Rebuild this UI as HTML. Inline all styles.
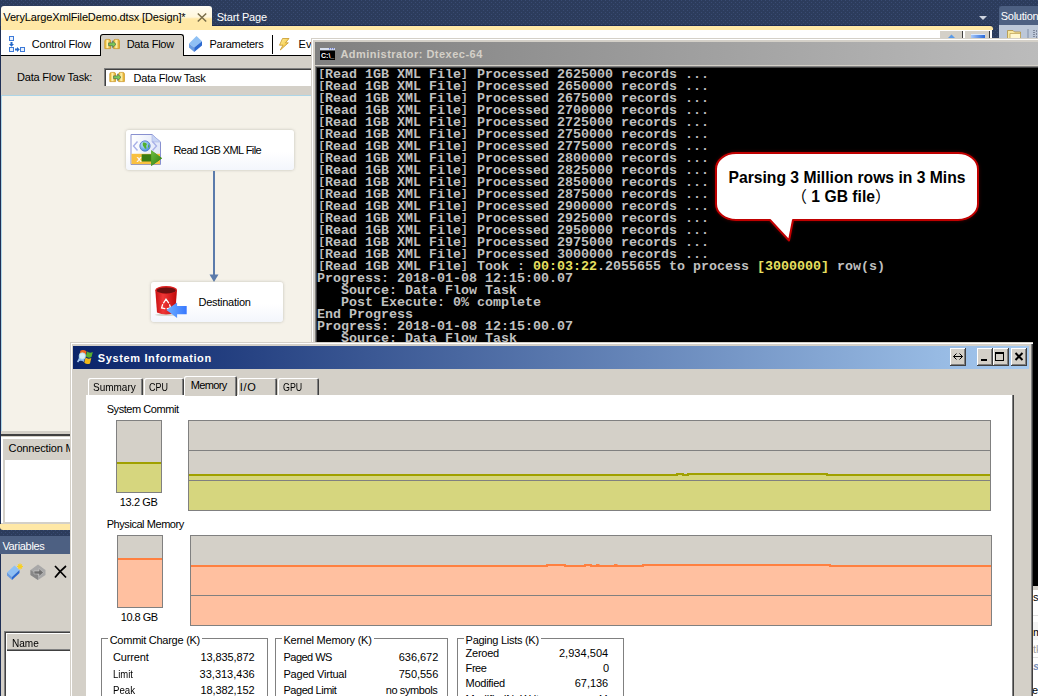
<!DOCTYPE html>
<html>
<head>
<meta charset="utf-8">
<title>VeryLargeXmlFileDemo</title>
<style>
html,body{margin:0;padding:0;}
body{width:1038px;height:696px;overflow:hidden;position:relative;background:#293955;font-family:"Liberation Sans",sans-serif;font-size:11px;color:#000;}
.a{position:absolute;}
.t{position:absolute;white-space:nowrap;line-height:14px;height:14px;}
.layer{position:absolute;left:0;top:0;width:1038px;height:696px;overflow:hidden;}
#vs{background-color:#2c3c5c;
 background-image:radial-gradient(circle at 1.5px 0.5px,#394b72 0.55px,transparent 0.75px),radial-gradient(circle at 3.5px 2.5px,#394b72 0.55px,transparent 0.75px);background-size:4px 4px;}
/* console */
#con{left:311px;top:38px;width:740px;height:552px;background:#d4d0c8;box-shadow:inset 1px 1px 0 #d4d0c8, inset 2px 2px 0 #fff;}
#contitle{left:315px;top:42px;width:740px;height:23px;background:linear-gradient(90deg,#808080 0%,#bdbdbd 100%);}
#conbody{left:315px;top:66px;width:740px;height:520px;background:#000;box-shadow:inset 1px 1px 0 #808080, inset 2px 2px 0 #404040;overflow:hidden;}
#context{left:2px;top:3px;font-family:"Liberation Mono",monospace;font-weight:bold;font-size:13.333px;line-height:12px;color:#c0c0c0;white-space:pre;margin:0;}
#context b{color:#e8e060;font-weight:bold;}
#context i{font-style:normal;font-size:11px;display:inline-block;width:8px;text-align:center;line-height:10px;vertical-align:1px;}
/* sysinfo */
#si{left:70px;top:342px;width:963px;height:400px;background:#d4d0c8;box-shadow:inset 1px 1px 0 #d4d0c8, inset 2px 2px 0 #fff, inset -1px 0 0 #404040, inset -2px 0 0 #808080;}
#sititle{left:73px;top:346px;width:956px;height:23px;background:linear-gradient(90deg,#0a246a 0%,#a6caf0 100%);}
.cb{position:absolute;top:348px;height:18px;width:16px;background:#d4d0c8;box-shadow:inset -1px -1px 0 #404040, inset 1px 1px 0 #fff, inset -2px -2px 0 #808080;}
#page{left:86px;top:395px;width:928px;height:400px;background:#fff;box-shadow:inset -1px 0 0 #404040, inset -2px 0 0 #808080;}
.tab{position:absolute;top:378px;height:18px;background:#d4d0c8;box-shadow:inset 1px 1px 0 #fff, inset -1px 0 0 #404040, inset -2px 0 0 #808080;border-radius:2px 2px 0 0;}
.tab.sel{top:376px;height:20px;}
.gb{position:absolute;border:1px solid #808080;box-sizing:border-box;}
</style>
</head>
<body>
<div id="vs" class="layer">
<!-- document tab strip -->
<div class="a" style="left:1px;top:6px;width:211px;height:24px;border-radius:3px 3px 0 0;background:linear-gradient(180deg,#fffdf4 0%,#fff7dc 46%,#ffe8a6 54%,#ffe8a6 100%);"></div>
<svg class="a" style="left:196px;top:12px;" width="12" height="11" viewBox="0 0 12 11"><path d="M1.8 1.5 L10.2 9.5 M10.2 1.5 L1.8 9.5" stroke="#7a6e4a" stroke-width="1.5" fill="none"/></svg>
<svg class="a" style="left:978px;top:15px;" width="10" height="6" viewBox="0 0 10 6"><path d="M1 1 H9 L5 5 Z" fill="#ced4df"/></svg>
<!-- yellow frame line -->
<div class="a" style="left:212px;top:25px;width:780px;height:1px;background:#1c2a50;"></div>
<div class="a" style="left:0;top:26px;width:993px;height:4px;background:#ffe8a6;border-radius:0 3px 0 0;"></div>
<!-- designer toolbar row -->
<div class="a" style="left:1px;top:30px;width:991px;height:25px;background:#fff;"></div>
<div class="a" style="left:1px;top:55px;width:991px;height:1px;background:#000;"></div>
<!-- designer top-right buttons -->
<div class="a" style="left:940px;top:31px;width:23px;height:10px;background:#d4d0c8;box-shadow:inset -1px 0 0 #404040;"></div>
<svg class="a" style="left:947px;top:34px;" width="9" height="5" viewBox="0 0 9 5"><path d="M0 5 L4.5 0.5 L9 5 Z" fill="#5a9ae8"/></svg>
<div class="a" style="left:965px;top:31px;width:25px;height:10px;background:#d4d0c8;box-shadow:inset -1px 0 0 #404040;"></div>
<div class="a" style="left:971px;top:34px;width:14px;height:5px;background:linear-gradient(90deg,#a8c8f8,#2868d8);border-top:1px solid #d8e8ff;"></div>
<!-- data flow selected tab -->
<div class="a" style="left:100px;top:34px;width:84px;height:22px;background:#d4d0c8;border:1px solid #000;border-bottom:none;border-radius:3px 3px 0 0;box-sizing:border-box;"></div>
<div class="a" style="left:272px;top:35px;width:1px;height:19px;background:#000;"></div>
<!-- gray band with combo -->
<div class="a" style="left:1px;top:56px;width:991px;height:39px;background:#d4d0c8;"></div>
<div class="a" style="left:104px;top:68px;width:300px;height:18px;background:#fff;box-shadow:inset 1px 1px 0 #808080, inset 2px 2px 0 #404040;"></div>
<!-- design surface -->
<div class="a" style="left:1px;top:95px;width:991px;height:1px;background:#add6e8;"></div>
<div class="a" style="left:1px;top:96px;width:991px;height:335px;background:#f5f2e9;"></div>
<div class="a" style="left:0;top:26px;width:1px;height:500px;background:#1f2f55;"></div>
<div class="a" style="left:1px;top:96px;width:1px;height:335px;background:#add6e8;"></div>
<!-- nodes -->
<div class="a" style="left:126px;top:130px;width:168px;height:40px;border-radius:3px;background:linear-gradient(180deg,#fff 0%,#fff 55%,#f3f6fc 100%);box-shadow:0 0 3px rgba(120,120,110,.45);"></div>
<div class="a" style="left:213px;top:171px;width:2px;height:104px;background:#5b7bab;"></div>
<svg class="a" style="left:208px;top:273px;" width="12" height="10" viewBox="0 0 12 10"><path d="M1.5 1.5 H10.5 L6 9 Z" fill="#5b7bab"/></svg>
<div class="a" style="left:151px;top:282px;width:132px;height:40px;border-radius:3px;background:linear-gradient(180deg,#fff 0%,#fff 55%,#f3f6fc 100%);box-shadow:0 0 3px rgba(120,120,110,.45);"></div>

<!-- control flow icon -->
<svg class="a" style="left:8px;top:35px;" width="19" height="19" viewBox="8 35 19 19">
<g fill="#e8f0fc" stroke="#3c7ad8" stroke-width="1"><rect x="9.5" y="36.5" width="4" height="4"/><rect x="9.5" y="47.5" width="4" height="4"/><rect x="20.5" y="47.5" width="4" height="4"/></g>
<path d="M10.5 42 H12.5 V44 H14 L11.5 46.8 L9 44 H10.5 Z M15 48.5 H17 V47 L19.8 49.5 L17 52 V50.5 H15 Z" fill="#2468c8"/>
</svg>
<!-- data flow icons -->
<svg class="a" style="left:104px;top:38px;" width="17" height="12" viewBox="0 0 17 12" id="dficon">
<defs><linearGradient id="yg" x1="0" x2="1" y1="0" y2="0"><stop offset="0" stop-color="#e8b020"/><stop offset=".45" stop-color="#fff4b0"/><stop offset="1" stop-color="#e0a010"/></linearGradient></defs>
<path d="M.8 3 Q.8 1.4 2.4 1.4 H5 Q6.6 1.4 6.6 3 V10.6 H.8 Z" fill="url(#yg)" stroke="#c89018" stroke-width=".7"/>
<path d="M9.6 3 Q9.6 1.4 11.2 1.4 H13.8 Q15.4 1.4 15.4 3 V10.6 H9.6 Z" fill="url(#yg)" stroke="#c89018" stroke-width=".7"/>
<path d="M4.6 4.9 H8.6 V3 L12 6.3 L8.6 9.6 V7.7 H4.6 Z" fill="#78c858" stroke="#4a6a4a" stroke-width=".7"/>
</svg>
<svg class="a" style="left:109px;top:71px;" width="17" height="12" viewBox="0 0 17 12">
<path d="M.8 3 Q.8 1.4 2.4 1.4 H5 Q6.6 1.4 6.6 3 V10.6 H.8 Z" fill="url(#yg)" stroke="#c89018" stroke-width=".7"/>
<path d="M9.6 3 Q9.6 1.4 11.2 1.4 H13.8 Q15.4 1.4 15.4 3 V10.6 H9.6 Z" fill="url(#yg)" stroke="#c89018" stroke-width=".7"/>
<path d="M4.6 4.9 H8.6 V3 L12 6.3 L8.6 9.6 V7.7 H4.6 Z" fill="#78c858" stroke="#4a6a4a" stroke-width=".7"/>
</svg>
<!-- parameters icon -->
<svg class="a" style="left:188px;top:35px;" width="16" height="18" viewBox="188 35 16 18">
<path d="M196.5 36 L202 41.3 L194.2 47.6 L189 43.6 Z" fill="#8fc0f4"/>
<path d="M189 43.6 L194.2 47.6 V52 L189 47.6 Z" fill="#6a9ce0"/>
<path d="M194.2 47.6 L202 41.3 V45.6 L194.2 52 Z" fill="#2c6ad0"/>
</svg>
<!-- event handler bolt -->
<svg class="a" style="left:278px;top:37px;" width="13" height="14" viewBox="278 37 13 14">
<defs><linearGradient id="bg1" x1="0" x2="1" y1="0" y2="1"><stop offset="0" stop-color="#fff0a0"/><stop offset="1" stop-color="#f0b820"/></linearGradient></defs>
<path d="M282.5 38.5 H289 L285.5 42.8 H288.3 L280.3 50 L283 45.2 H279.5 Z" fill="url(#bg1)" stroke="#c89828" stroke-width=".8" stroke-linejoin="round"/>
</svg>
<!-- xml source icon -->
<svg class="a" style="left:129px;top:133px;" width="35" height="35" viewBox="129 133 35 35">
<defs><linearGradient id="pg" x1="0" x2="1" y1="0" y2="0"><stop offset="0" stop-color="#ffffff"/><stop offset="1" stop-color="#dfe6f8"/></linearGradient>
<radialGradient id="gl" cx=".4" cy=".35" r=".7"><stop offset="0" stop-color="#d8f0ff"/><stop offset="1" stop-color="#3a8ae0"/></radialGradient>
<linearGradient id="ga" x1="0" x2="1" y1="0" y2="1"><stop offset="0" stop-color="#70c040"/><stop offset="1" stop-color="#2c7a10"/></linearGradient></defs>
<path d="M131 134.5 H152 L160.5 142 V164.5 H131 Z" fill="url(#pg)" stroke="#8890d0" stroke-width="1"/>
<path d="M152 134.5 V142 H160.5 Z" fill="#c8d4f4" stroke="#a8b4e4" stroke-width=".6"/>
<rect x="131.5" y="153.8" width="28.5" height="10.4" fill="#f9c040"/>
<path d="M137.5 141.5 L133.5 146 L137.5 150.5 M152.5 141.5 L156.5 146 L152.5 150.5" stroke="#a8b0e8" stroke-width="1.4" fill="none"/>
<circle cx="145" cy="146" r="5.2" fill="url(#gl)" stroke="#5878c8" stroke-width=".8"/>
<path d="M143 142.5 Q146 142 147 144 Q145.5 146 146.5 148.5 Q144.5 149.5 144 147 Q142 145.5 143 142.5 Z M148.5 144 Q150 145.5 149 148 Q147.5 147 148.5 144Z" fill="#50b030"/>
<text x="136.8" y="162" font-family="Liberation Sans, sans-serif" font-weight="bold" font-size="8" fill="#fff">X</text>
<path d="M141.7 154.3 H151.2 V150.2 L162 158.2 L151.2 166 V161.6 H141.7 Z" fill="#3a7c14"/>
<path d="M151.2 150.2 L162 158.2 L151.2 166 Z" fill="url(#ga)"/>
</svg>
<!-- destination icon -->
<svg class="a" style="left:153px;top:284px;" width="36" height="36" viewBox="153 284 36 36">
<defs><linearGradient id="rb" x1="0" x2="1" y1="0" y2="0"><stop offset="0" stop-color="#c81010"/><stop offset=".35" stop-color="#f03838"/><stop offset="1" stop-color="#c00808"/></linearGradient>
<linearGradient id="ba" x1="0" x2="1" y1="0" y2="0"><stop offset="0" stop-color="#70b0ff"/><stop offset="1" stop-color="#3878ff"/></linearGradient></defs>
<ellipse cx="166" cy="314.8" rx="11" ry="1.2" fill="#d8d8d0"/>
<path d="M155.3 290 L157 312.5 Q166 316.5 175.2 312.5 L177 290 Z" fill="url(#rb)"/>
<ellipse cx="166.2" cy="290" rx="10.9" ry="3.9" fill="#e02020"/>
<ellipse cx="166.2" cy="290.4" rx="9.6" ry="3" fill="#6c1010"/>
<path d="M163.6 302.8 L166 299.2 L168.6 302.8 M169.6 304.8 L170.6 308 L167.3 308.6 M164.8 308.6 L161.6 308 L162.6 304.6" stroke="#fff" stroke-width="1.3" fill="none" stroke-linecap="round"/>
<path d="M166.4 310 L177.1 302.5 V306 H186.7 V314.2 H177.1 V318 Z" fill="url(#ba)"/>
</svg>


<!-- connection managers -->
<div class="a" style="left:1px;top:431px;width:991px;height:3px;background:#d4d0c8;"></div>
<div class="a" style="left:1px;top:434px;width:991px;height:2px;background:#404040;"></div>
<div class="a" style="left:1px;top:436px;width:991px;height:90px;background:#d4d0c8;"></div>
<div class="a" style="left:2px;top:437px;width:991px;height:2px;background:#fff;"></div>
<div class="a" style="left:1px;top:437px;width:2px;height:86px;background:#fff;"></div>
<div class="a" style="left:5px;top:460px;width:980px;height:62px;background:#fff;"></div>
<div class="a" style="left:0;top:524px;width:993px;height:6px;background:#ffe8a6;border-radius:0 0 3px 3px;"></div>
<!-- variables -->
<div class="a" style="left:0;top:536px;width:993px;height:18px;background:#4d6082;"></div>
<div class="a" style="left:0;top:554px;width:993px;height:150px;background:#d4d0c8;"></div>
<div class="a" style="left:0;top:554px;width:1px;height:150px;background:#1f2f55;"></div>
<div class="a" style="left:4px;top:631px;width:980px;height:70px;background:#fff;box-shadow:inset 1px 1px 0 #808080, inset 2px 2px 0 #404040;"></div>
<div class="a" style="left:6px;top:633px;width:970px;height:18px;background:#d4d0c8;box-shadow:inset 1px 1px 0 #fff, inset 0 -1px 0 #404040, inset 0 -2px 0 #808080;"></div>
<!-- variables toolbar icons -->
<svg class="a" style="left:5px;top:563px;" width="66" height="18" viewBox="5 563 66 18">
<path d="M14.5 565.5 L19.5 570 L12 577 L7 572.5 Z" fill="#8fc0f4"/><path d="M7 572.5 L12 577 V580 L7 575.5 Z" fill="#6a9ce0"/><path d="M12 577 L19.5 570 V573 L12 580 Z" fill="#2c6ad0"/>
<path d="M20 563.5 V569.5 M17 566.5 H23 M18 564.5 L22 568.5 M22 564.5 L18 568.5" stroke="#f8d020" stroke-width="1.1"/>
<path d="M38 564.5 L45.5 570 V575 L38 580 L30.5 575 V570 Z" fill="#a8a8a8"/><path d="M30.5 570 L38 575 V580 L30.5 575Z" fill="#888"/><path d="M34 571 H39 V568.5 L43.5 572.5 L39 576.5 V574 H34 Z" fill="#707070" stroke="#d0d0d0" stroke-width=".5"/>
<path d="M55 566 L66 577.5 M66 566 Q60 571 55 577.5" stroke="#000" stroke-width="1.7" fill="none"/>
</svg>
<!-- solution explorer stub -->
<div class="a" style="left:999px;top:6px;width:60px;height:19px;background:#4d6082;border-radius:3px 0 0 0;"></div>
<div class="a" style="left:999px;top:25px;width:60px;height:14px;background:#bcc7d8;"></div>
<!-- solution explorer toolbar icon -->
<svg class="a" style="left:1005px;top:28px;" width="33" height="12" viewBox="1005 28 33 12">
<path d="M1007.5 30.5 H1013 L1014.5 32 H1020.5 V40 H1007.5 Z" fill="#f8e8a0" stroke="#b09040" stroke-width=".8"/>
<path d="M1010 33.5 H1020.5 V40 H1010 Z" fill="#fff8d0" stroke="#b09040" stroke-width=".6"/>
<rect x="1027.5" y="29" width="1" height="10" fill="#8090a8"/>
<path d="M1034 30 V40 M1036 31 H1038 M1036 34 H1038 M1036 37 H1038" stroke="#404860" stroke-width="1" stroke-dasharray="1 1"/>
</svg>
<!-- right strip under console -->
<div class="a" style="left:1033px;top:586px;width:5px;height:110px;background:#fff;"></div>

<div class="a" style="left:1033px;top:585px;width:5px;height:3px;background:#d4d0c8;"></div>
<div class="a" style="left:1033px;top:615px;width:5px;height:1px;background:#e0e0e0;"></div>
<div class="a" style="left:1033px;top:622px;width:5px;height:18px;background:#f4f4f4;"></div>
<div class="a" style="left:1033px;top:657px;width:5px;height:1px;background:#e0e0e0;"></div>
<div class="t" style="left:1033px;top:590px;">so</div>
<div class="t" style="left:1033px;top:625px;">m</div>
<div class="t" style="left:1033px;top:642px;color:#a0a0a0;">tk</div>
<div class="t" style="left:1033px;top:659px;color:#7890b8;font-weight:bold;font-style:italic;">s</div>
<div class="t" style="left:1032px;top:683px;">es</div>
<div class="t" style="left:3.3px;top:10.0px;letter-spacing:-0.14px;">VeryLargeXmlFileDemo.dtsx [Design]*</div>
<div class="t" style="left:216.7px;top:10.0px;letter-spacing:-0.17px;color:#fff;">Start Page</div>
<div class="t" style="left:31.8px;top:37.0px;letter-spacing:-0.22px;">Control Flow</div>
<div class="t" style="left:126.7px;top:37.0px;letter-spacing:-0.26px;">Data Flow</div>
<div class="t" style="left:209.6px;top:37.0px;letter-spacing:-0.31px;">Parameters</div>
<div class="t" style="left:298.6px;top:37.0px;">Ev</div>
<div class="t" style="left:17.0px;top:70.0px;letter-spacing:-0.19px;">Data Flow Task:</div>
<div class="t" style="left:133.5px;top:71.0px;letter-spacing:-0.21px;">Data Flow Task</div>
<div class="t" style="left:173.5px;top:143.0px;letter-spacing:-0.58px;">Read 1GB XML File</div>
<div class="t" style="left:198.5px;top:295.0px;letter-spacing:-0.26px;">Destination</div>
<div class="t" style="left:8.6px;top:441.0px;letter-spacing:-0.16px;">Connection Managers</div>
<div class="t" style="left:2.4px;top:539.0px;letter-spacing:-0.33px;color:#fff;">Variables</div>
<div class="t" style="left:11.5px;top:636.0px;transform:scaleX(0.914);transform-origin:0 0;">Name</div>
<div class="t" style="left:1000.8px;top:9.0px;letter-spacing:-0.28px;color:#fff;">Solution Explorer</div>
</div>
<div class="layer" id="conl">
<div id="con" class="a"></div>
<div id="contitle" class="a"></div>
<svg class="a" style="left:320px;top:48px;" width="15" height="12" viewBox="0 0 15 12"><rect x="0" y="0" width="15" height="12" fill="#000"/><rect x="0" y="0" width="15" height="2.4" fill="#d8e0f0"/><rect x="9" y="0.3" width="1.2" height="1" fill="#4858c0"/><rect x="11" y="0.3" width="1.2" height="1" fill="#4858c0"/><rect x="13" y="0.3" width="1.2" height="1" fill="#4858c0"/><text x="1" y="9.6" font-family="Liberation Sans, sans-serif" font-size="7" font-weight="bold" fill="#fff">C:\_</text></svg>

<div id="conbody" class="a"><pre id="context" class="a"><i style="text-align:right">[</i>Read 1GB XML File<i style="text-align:left">]</i> Processed 2625000 records ...
<i style="text-align:right">[</i>Read 1GB XML File<i style="text-align:left">]</i> Processed 2650000 records ...
<i style="text-align:right">[</i>Read 1GB XML File<i style="text-align:left">]</i> Processed 2675000 records ...
<i style="text-align:right">[</i>Read 1GB XML File<i style="text-align:left">]</i> Processed 2700000 records ...
<i style="text-align:right">[</i>Read 1GB XML File<i style="text-align:left">]</i> Processed 2725000 records ...
<i style="text-align:right">[</i>Read 1GB XML File<i style="text-align:left">]</i> Processed 2750000 records ...
<i style="text-align:right">[</i>Read 1GB XML File<i style="text-align:left">]</i> Processed 2775000 records ...
<i style="text-align:right">[</i>Read 1GB XML File<i style="text-align:left">]</i> Processed 2800000 records ...
<i style="text-align:right">[</i>Read 1GB XML File<i style="text-align:left">]</i> Processed 2825000 records ...
<i style="text-align:right">[</i>Read 1GB XML File<i style="text-align:left">]</i> Processed 2850000 records ...
<i style="text-align:right">[</i>Read 1GB XML File<i style="text-align:left">]</i> Processed 2875000 records ...
<i style="text-align:right">[</i>Read 1GB XML File<i style="text-align:left">]</i> Processed 2900000 records ...
<i style="text-align:right">[</i>Read 1GB XML File<i style="text-align:left">]</i> Processed 2925000 records ...
<i style="text-align:right">[</i>Read 1GB XML File<i style="text-align:left">]</i> Processed 2950000 records ...
<i style="text-align:right">[</i>Read 1GB XML File<i style="text-align:left">]</i> Processed 2975000 records ...
<i style="text-align:right">[</i>Read 1GB XML File<i style="text-align:left">]</i> Processed 3000000 records ...
<i style="text-align:right">[</i>Read 1GB XML File<i style="text-align:left">]</i> Took : <b>00:03:22</b>.2055655 to process <b>[3000000]</b> row(s)
Progress: 2018-01-08 12:15:00.07
   Source: Data Flow Task
   Post Execute: 0% complete
End Progress
Progress: 2018-01-08 12:15:00.07
   Source: Data Flow Task
   Post Execute: 0% complete</pre></div>
<div class="t" style="left:340.4px;top:47.0px;letter-spacing:0.48px;font-weight:bold;color:#d4d0c8;">Administrator: Dtexec-64</div>
<svg class="a" style="left:706px;top:145px;" width="290" height="110" viewBox="706 145 290 110">
<defs><filter id="cg" x="-10%" y="-20%" width="120%" height="140%"><feGaussianBlur stdDeviation="2"/></filter></defs>
<path d="M736 153 H958 A20 16 0 0 1 978 169 V204 A20 16 0 0 1 958 220 H793 L789 240.5 L770 220 H736 A20 16 0 0 1 716 204 V169 A20 16 0 0 1 736 153 Z" fill="#7a0000" opacity=".9" filter="url(#cg)"/>
<path d="M736 153 H958 A20 16 0 0 1 978 169 V204 A20 16 0 0 1 958 220 H793 L789 240.5 L770 220 H736 A20 16 0 0 1 716 204 V169 A20 16 0 0 1 736 153 Z" fill="#fff" stroke="#c00000" stroke-width="2" stroke-linejoin="round"/>
</svg>
<div class="a" style="left:716px;top:167.5px;width:262px;text-align:center;font-family:'Liberation Sans','Noto Sans CJK SC',sans-serif;font-weight:bold;font-size:15.7px;line-height:19.5px;color:#000;white-space:nowrap;">Parsing 3 Million rows in 3 Mins<br><span style="position:relative;left:-6px;"><span style="font-weight:normal">（</span> 1 GB file<span style="font-weight:normal">）</span></span></div>
</div>
<div class="layer" id="sil">
<div id="si" class="a"></div>
<div id="sititle" class="a"></div>
<svg class="a" style="left:77px;top:349px;" width="17" height="16" viewBox="77 349 17 16">
<path d="M80.5 350.5 Q83.5 349 86.5 351.2 L85.5 356 Q82.5 354 79.5 355.5 Z" fill="#f06820"/>
<path d="M87 351.5 Q89.5 353.5 92.8 352 L91.5 357 Q88.5 358.5 85.8 356.5 Z" fill="#58b030"/>
<path d="M79 356.5 Q82 355 85 357 L84 362 Q81 360 78 361.5 Z" fill="#88b8f0"/>
<path d="M85.5 357.5 Q88 359.5 91.3 358 L90 363.5 Q87 365 84.3 362.8 Z" fill="#f0b818"/>
<circle cx="82.3" cy="356" r="3.2" fill="#d8f0f8" stroke="#a8d8e8" stroke-width=".8"/>
<path d="M79.5 359.5 L77.5 362" stroke="#a8c8f0" stroke-width="1.6"/>
</svg>
<div class="cb" style="left:950px;"><svg class="a" style="left:2px;top:3px" width="12" height="11" viewBox="0 0 12 11"><path d="M1.5 5.5 H10.5 M4.5 2.5 L1.5 5.5 L4.5 8.5 M7.5 2.5 L10.5 5.5 L7.5 8.5" stroke="#000" stroke-width="1" fill="none"/></svg></div>
<div class="cb" style="left:977px;"><div class="a" style="left:4px;top:11px;width:6px;height:2px;background:#000"></div></div>
<div class="cb" style="left:993px;"><div class="a" style="left:2px;top:4px;width:9px;height:9px;border:1px solid #000;border-top-width:2px;box-sizing:border-box;"></div></div>
<div class="cb" style="left:1011px;"><svg class="a" style="left:3px;top:4px" width="10" height="9" viewBox="0 0 10 9"><path d="M1.5 1 L8.5 8 M8.5 1 L1.5 8" stroke="#000" stroke-width="2" fill="none"/></svg></div>
<div class="tab" style="left:88px;width:55px;"></div>
<div class="tab" style="left:144px;width:40px;"></div>
<div class="tab" style="left:238px;width:39px;"></div>
<div class="tab" style="left:278px;width:41px;"></div>
<div id="page" class="a"></div>
<div class="tab sel" style="left:184px;width:53px;"></div>
<!-- gauges -->
<div class="a" style="left:116px;top:420px;width:46px;height:73px;box-sizing:border-box;border:1px solid #808080;background:linear-gradient(180deg,#d4d0c8 0,#d4d0c8 41px,#a0a000 41px,#a0a000 43px,#d6d67e 43px);"></div>
<div class="a" style="left:117px;top:535px;width:46px;height:73px;box-sizing:border-box;border:1px solid #808080;background:linear-gradient(180deg,#d4d0c8 0,#d4d0c8 22px,#ff8040 22px,#ff8040 24px,#ffc0a0 24px);"></div>
<svg class="a" style="left:188px;top:420px;" width="803" height="91" viewBox="0 0 803 91">
<rect x="0.5" y="0.5" width="802" height="90" fill="#d4d0c8" stroke="#808080"/>
<path d="M1 55 H489 V54 H495 V55 H500 V54 H639 V55 H802 V90 H1 Z" fill="#d6d67e"/>
<path d="M1 30.5 H802 M1 60.5 H802" stroke="#808080" stroke-width="1" fill="none"/>
<path d="M1 55 H489 V54 H495 V55 H500 V54 H639 V55 H802" stroke="#a0a000" stroke-width="2" fill="none"/>
</svg>
<svg class="a" style="left:190px;top:535px;" width="802" height="91" viewBox="0 0 802 91">
<rect x="0.5" y="0.5" width="801" height="90" fill="#d4d0c8" stroke="#808080"/>
<path d="M1 31 H357 V30 H375 V31 H395 V30 H401 V31 H407 V30 H408.5 V31 H425 V30 H426.5 V31 H453 V30 H640 V31 H801 V90 H1 Z" fill="#ffc0a0"/>
<path d="M1 30.5 H801 M1 60.5 H801" stroke="#808080" stroke-width="1" fill="none"/>
<path d="M1 31 H357 V30 H375 V31 H395 V30 H401 V31 H407 V30 H408.5 V31 H425 V30 H426.5 V31 H453 V30 H640 V31 H801" stroke="#ff8040" stroke-width="2" fill="none"/>
</svg>
<div class="gb" style="left:101px;top:638px;width:167px;height:80px;"></div>
<div class="gb" style="left:275px;top:638px;width:173px;height:80px;"></div>
<div class="gb" style="left:457px;top:638px;width:167px;height:80px;"></div>
<div class="t" style="left:97.8px;top:351.0px;letter-spacing:0.63px;font-weight:bold;color:#fff;">System Information</div>
<div class="t" style="left:92.8px;top:380.0px;transform:scaleX(0.908);transform-origin:0 0;">Summary</div>
<div class="t" style="left:148.7px;top:380.0px;transform:scaleX(0.816);transform-origin:0 0;">CPU</div>
<div class="t" style="left:190.8px;top:378.0px;letter-spacing:-0.64px;">Memory</div>
<div class="t" style="left:239.8px;top:380.0px;letter-spacing:0.69px;">I/O</div>
<div class="t" style="left:282.8px;top:380.0px;transform:scaleX(0.804);transform-origin:0 0;">GPU</div>
<div class="t" style="left:106.7px;top:402.0px;letter-spacing:-0.44px;">System Commit</div>
<div class="t" style="left:119.8px;top:495.0px;letter-spacing:-0.40px;">13.2 GB</div>
<div class="t" style="left:106.7px;top:517.0px;letter-spacing:-0.44px;">Physical Memory</div>
<div class="t" style="left:120.8px;top:610.0px;letter-spacing:-0.50px;">10.8 GB</div>
<div class="t" style="left:109.7px;top:633.0px;letter-spacing:-0.26px;background:#fff;padding:0 2px;margin-left:-2px;">Commit Charge (K)</div>
<div class="t" style="left:283.5px;top:633.0px;letter-spacing:-0.25px;background:#fff;padding:0 2px;margin-left:-2px;">Kernel Memory (K)</div>
<div class="t" style="left:465.6px;top:633.0px;letter-spacing:-0.28px;background:#fff;padding:0 2px;margin-left:-2px;">Paging Lists (K)</div>
<div class="t" style="left:112.9px;top:650.0px;letter-spacing:-0.12px;">Current</div>
<div class="t" style="left:200.4px;top:650.0px;letter-spacing:-0.09px;">13,835,872</div>
<div class="t" style="left:112.9px;top:667.0px;transform:scaleX(0.859);transform-origin:0 0;">Limit</div>
<div class="t" style="left:199.6px;top:667.0px;">33,313,436</div>
<div class="t" style="left:112.9px;top:683.0px;transform:scaleX(0.880);transform-origin:0 0;">Peak</div>
<div class="t" style="left:200.4px;top:683.0px;letter-spacing:-0.09px;">18,382,152</div>
<div class="t" style="left:283.5px;top:650.0px;letter-spacing:-0.52px;">Paged WS</div>
<div class="t" style="left:398.7px;top:650.0px;letter-spacing:-0.02px;">636,672</div>
<div class="t" style="left:283.5px;top:667.0px;letter-spacing:-0.22px;">Paged Virtual</div>
<div class="t" style="left:398.7px;top:667.0px;letter-spacing:-0.02px;">750,556</div>
<div class="t" style="left:283.5px;top:683.0px;letter-spacing:-0.47px;">Paged Limit</div>
<div class="t" style="left:385.8px;top:683.0px;letter-spacing:-0.41px;">no symbols</div>
<div class="t" style="left:465.6px;top:646.0px;letter-spacing:-0.27px;">Zeroed</div>
<div class="t" style="left:558.9px;top:646.0px;letter-spacing:0.05px;">2,934,504</div>
<div class="t" style="left:465.6px;top:661.0px;letter-spacing:-0.43px;">Free</div>
<div class="t" style="left:603.0px;top:661.0px;">0</div>
<div class="t" style="left:465.6px;top:676.0px;letter-spacing:-0.28px;">Modified</div>
<div class="t" style="left:574.8px;top:676.0px;letter-spacing:-0.05px;">67,136</div>
<div class="t" style="left:465.6px;top:692.0px;letter-spacing:-0.11px;">ModifiedNoWrite</div>
<div class="t" style="left:596.5px;top:692.0px;letter-spacing:-0.52px;">44</div>
</div>
</body>
</html>
